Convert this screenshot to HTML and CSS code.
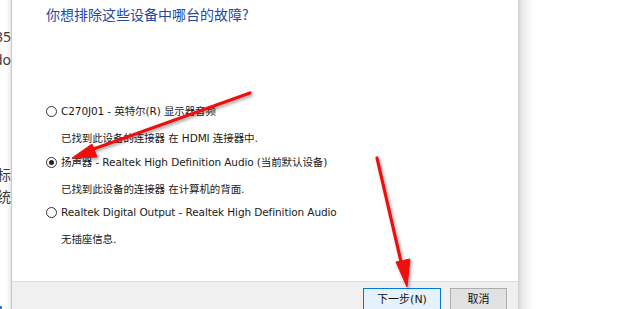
FILE: index.html
```html
<!DOCTYPE html>
<html lang="zh-CN">
<head>
<meta charset="utf-8">
<link rel="stylesheet" href="styles.css">
</head>
<body>
<div class="page">
  <div class="behind">
    <div class="bl l1"><span>1.35</span></div>
    <div class="bl l2"><span>Windo</span></div>
    <div class="bl l3"><span>目标</span></div>
    <div class="bl l4"><span>系统</span></div>
    <div class="tick"></div>
  </div>
  <div class="dialog">
    <div class="content">
      <h1 class="title">你想排除这些设备中哪台的故障?</h1>
      <div class="options">
        <div class="opt"><span class="radio"></span><span>C270J01 - 英特尔(R) 显示器音频</span></div>
        <div class="desc">已找到此设备的连接器 在 HDMI 连接器中.</div>
        <div class="opt"><span class="radio checked"></span><span>扬声器 - Realtek High Definition Audio (当前默认设备)</span></div>
        <div class="desc">已找到此设备的连接器 在计算机的背面.</div>
        <div class="opt"><span class="radio"></span><span>Realtek Digital Output - Realtek High Definition Audio</span></div>
        <div class="desc">无插座信息.</div>
      </div>
    </div>
    <div class="footer">
      <button class="btn primary">下一步(N)</button>
      <button class="btn">取消</button>
    </div>
  </div>
  <div class="rightside"></div>
</div>
<svg class="arrows" width="620" height="309" viewBox="0 0 620 309">
  <defs>
    <filter id="sh" x="-20%" y="-20%" width="140%" height="140%">
      <feDropShadow dx="1.5" dy="2" stdDeviation="1.5" flood-color="#000" flood-opacity="0.35"/>
    </filter>
  </defs>
  <g filter="url(#sh)" fill="#f01010" stroke="#f01010">
    <line x1="250" y1="93" x2="88" y2="151" stroke-width="3.2" stroke-linecap="round"/>
    <polygon points="72,158 92,144 97,157" stroke-width="1" stroke-linejoin="round"/>
    <line x1="377" y1="158" x2="402" y2="266" stroke-width="3.2" stroke-linecap="round"/>
    <polygon points="407,287 396,262 410,259" stroke-width="1" stroke-linejoin="round"/>
  </g>
</svg>
</body>
</html>
```

FILE: styles.css
```css
html, body {
  margin: 0;
  padding: 0;
  background: #ffffff;
}
body {
  width: 620px;
  height: 309px;
  overflow: hidden;
  position: relative;
  font-family: "DejaVu Sans", "Noto Sans CJK SC", sans-serif;
}
.page {
  display: flex;
  height: 309px;
}
.behind {
  width: 11px;
  flex: none;
  overflow: hidden;
  position: relative;
  background: linear-gradient(to right, #ffffff 0%, #ffffff 60%, #e9e9e9 100%);
}
.bl {
  white-space: nowrap;
  font-family: "Noto Sans", "Noto Sans CJK SC", sans-serif;
  font-size: 14px;
  line-height: 20px;
  color: #3a3a3a;
  display: flex;
  justify-content: flex-end;
}
.bl span {
  flex: none;
}
.l1 { margin-top: 27px; }
.l2 { margin-top: 3px; }
.l3 { margin-top: 95px; }
.l4 { margin-top: 2px; }
.tick {
  position: absolute;
  left: 0;
  bottom: 0;
  width: 2px;
  height: 3px;
  background: #2a7bd4;
}
.dialog {
  width: 506px;
  flex: none;
  border-left: 1px solid #c9c9c9;
  display: flex;
  flex-direction: column;
  background: #ffffff;
}
.content {
  flex: 1;
  padding: 4px 0 0 34px;
}
.title {
  margin: 0;
  font-family: "Noto Sans CJK SC", sans-serif;
  font-size: 14px;
  font-weight: normal;
  line-height: 20px;
  color: #2447a0;
}
.options {
  margin-top: 80px;
  font-size: 10.5px;
  letter-spacing: -0.1px;
  color: #1a1a1a;
}
.opt {
  display: flex;
  align-items: center;
  gap: 4px;
  height: 14px;
  line-height: 14px;
}
.desc {
  padding-left: 15px;
  height: 14px;
  line-height: 14px;
  margin-top: 13px;
  margin-bottom: 9px;
}
.options .desc:nth-of-type(2),
.options .desc:nth-of-type(3) {
  margin-bottom: 10px;
}
.radio {
  width: 9px;
  height: 9px;
  border: 1px solid #333;
  border-radius: 50%;
  background: #fff;
  flex: none;
  position: relative;
}
.radio.checked::after {
  content: "";
  position: absolute;
  left: 2px;
  top: 2px;
  width: 5px;
  height: 5px;
  border-radius: 50%;
  background: #222;
}
.footer {
  border-top: 1px solid #dedede;
  background: #f0f0f0;
  display: flex;
  justify-content: flex-end;
  align-items: flex-start;
  gap: 9px;
  padding: 6px 11px 0 0;
  box-sizing: border-box;
  height: 28px;
}
.btn {
  font-family: "DejaVu Sans", "Noto Sans CJK SC", sans-serif;
  font-size: 11px;
  color: #111;
  height: 24px;
  padding: 0;
  margin: 0;
  border: 1px solid #adadad;
  background: #e1e1e1;
  width: 57px;
  line-height: 18px;
  text-align: center;
}
.btn.primary {
  width: 78px;
  border-color: #0078d7;
  background: #e5f1fb;
}
.rightside {
  flex: 1;
  background: linear-gradient(to right, #d0d0d0 0px, #e6e6e6 3px, #f6f6f6 10px, #ffffff 16px);
}
.arrows {
  position: absolute;
  left: 0;
  top: 0;
  pointer-events: none;
}
```
